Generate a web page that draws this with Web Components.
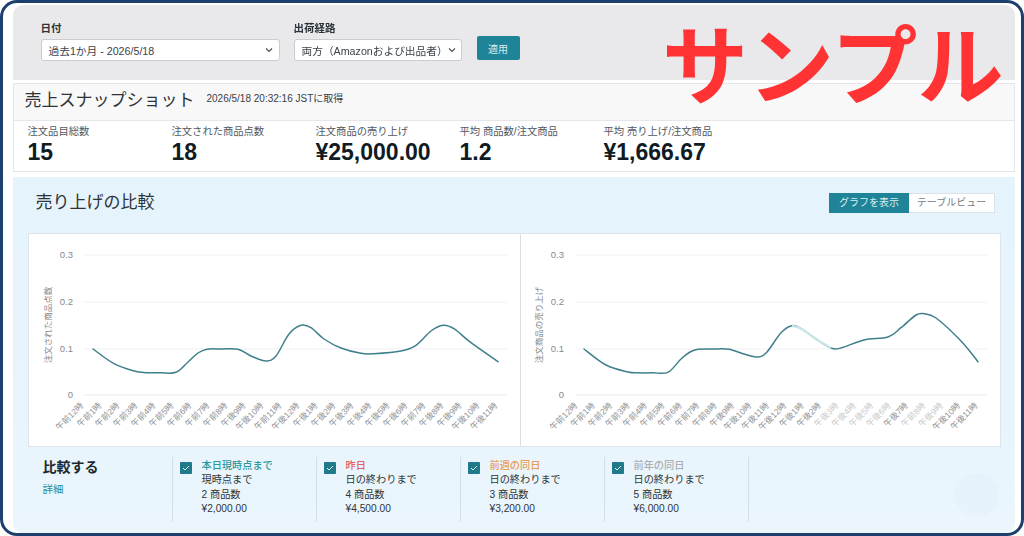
<!DOCTYPE html>
<html lang="ja">
<head>
<meta charset="utf-8">
<title>売上スナップショット</title>
<style>
  html, body { margin: 0; padding: 0; background: #fff; }
</style>
</head>
<body>
<sample-frame>
  <filter-bar>
    <select-box label="日付" value="過去1か月 - 2026/5/18" style="width:239px"></select-box>
    <select-box label="出荷経路" value="両方（Amazonおよび出品者）" style="width:168px"></select-box>
    <apply-button>適用</apply-button>
  </filter-bar>
  <sales-snapshot stamp="2026/5/18 20:32:16 JSTに取得">
    <stat-item label="注文品目総数" value="15"></stat-item>
    <stat-item label="注文された商品点数" value="18"></stat-item>
    <stat-item label="注文商品の売り上げ" value="¥25,000.00"></stat-item>
    <stat-item label="平均 商品数/注文商品" value="1.2"></stat-item>
    <stat-item label="平均 売り上げ/注文商品" value="¥1,666.67"></stat-item>
  </sales-snapshot>
  <compare-panel>
    <line-chart slot="charts" id="units" ytitle="注文された商品点数" style="width:492px"></line-chart>
    <line-chart slot="charts" id="sales" ytitle="注文商品の売り上げ" style="width:479px"></line-chart>
    <compare-item tone="#2a97a0" name="本日現時点まで" until="現時点まで" units="2 商品数" amount="¥2,000.00"></compare-item>
    <compare-item tone="#df5f63" name="昨日" until="日の終わりまで" units="4 商品数" amount="¥4,500.00"></compare-item>
    <compare-item tone="#e89c5c" name="前週の同日" until="日の終わりまで" units="3 商品数" amount="¥3,200.00"></compare-item>
    <compare-item tone="#a9aeb2" name="前年の同日" until="日の終わりまで" units="5 商品数" amount="¥6,000.00"></compare-item>
  </compare-panel>
</sample-frame>

<script>
class SampleFrame extends HTMLElement {
  constructor() {
    super();
    this.shadowDOM = this.attachShadow({ mode: "open" });
  }
  connectedCallback() {
    this.shadowDOM.innerHTML = `
      <style>
        :host {
          display: block;
          position: relative;
          box-sizing: border-box;
          width: 1024px;
          height: 536px;
          border: solid #1d3f6e;
          border-width: 3px 3px 3px 3.5px;
          border-radius: 17px;
          padding: 2px 6px 0 9.5px;
          background: #fff;
          font-family: "Liberation Sans", "Noto Sans CJK JP", sans-serif;
          color: #20282e;
        }
        .inner {
          display: flex;
          flex-direction: column;
          height: 100%;
          border-radius: 10px;
          overflow: hidden;
          filter: blur(0.35px);
        }
        .stamp {
          position: absolute;
          top: 6px;
          left: 659px;
          font: 700 86px/1.2 "Noto Sans CJK JP", sans-serif;
          color: #ff3333;
          white-space: nowrap;
        }
      </style>
      <div class="inner"><slot></slot></div>
      <div class="stamp">サンプル</div>`;
  }
}
customElements.define("sample-frame", SampleFrame);

class FilterBar extends HTMLElement {
  connectedCallback() {
    this.attachShadow({ mode: "open" }).innerHTML = `
      <style>
        :host {
          display: flex;
          flex: none;
          box-sizing: border-box;
          height: 75px;
          padding: 16px 0 0 28px;
          gap: 14px;
          background: #e9e9ec;
        }
      </style>
      <slot></slot>`;
  }
}
customElements.define("filter-bar", FilterBar);

class SelectBox extends HTMLElement {
  connectedCallback() {
    this.attachShadow({ mode: "open" }).innerHTML = `
      <style>
        :host { display: block; }
        label {
          display: block;
          height: 14px;
          margin-bottom: 4px;
          font-size: 10.5px;
          line-height: 14px;
          font-weight: 700;
          color: #2b3238;
        }
        .box {
          display: flex;
          align-items: center;
          justify-content: space-between;
          box-sizing: border-box;
          height: 22px;
          padding: 0 6px 0 7px;
          background: #fff;
          border: 1px solid #c9ccd0;
          border-radius: 3px;
          font-size: 10.7px;
          color: #3c4349;
          white-space: nowrap;
        }
        svg { flex: none; }
      </style>
      <label>${this.getAttribute("label")}</label>
      <div class="box">
        <span>${this.getAttribute("value")}</span>
        <svg width="8" height="6" viewBox="0 0 8 6"><path d="M1 1.5 4 4.5 7 1.5" fill="none" stroke="#4a5157" stroke-width="1.2"/></svg>
      </div>`;
  }
}
customElements.define("select-box", SelectBox);

class ApplyButton extends HTMLElement {
  connectedCallback() {
    this.attachShadow({ mode: "open" }).innerHTML = `
      <style>
        :host {
          display: flex;
          align-items: center;
          justify-content: center;
          box-sizing: border-box;
          width: 43px;
          height: 24px;
          margin: 15px 0 0 1px;
          background: #1f8497;
          border-radius: 2px;
          color: #d8eef1;
          font-size: 10px;
        }
      </style>
      <slot></slot>`;
  }
}
customElements.define("apply-button", ApplyButton);

class SalesSnapshot extends HTMLElement {
  connectedCallback() {
    this.attachShadow({ mode: "open" }).innerHTML = `
      <style>
        :host {
          display: block;
          flex: none;
          box-sizing: border-box;
          height: 89px;
          margin: 3px 0 5px;
          border: 1px solid #e6e6e8;
          background: #fff;
        }
        header {
          display: flex;
          align-items: center;
          box-sizing: border-box;
          height: 37px;
          padding: 0 0 7px 11px;
          background: #f8f8f8;
          border-bottom: 1px solid #e6e6e8;
        }
        h2 { margin: 0; font-size: 17px; font-weight: 400; color: #2e3438; }
        span { margin-left: 12px; font-size: 10px; color: #3a4147; position: relative; top: -1px; }
        .stats { display: flex; padding: 4px 0 0 14px; }
      </style>
      <header><h2>売上スナップショット</h2><span>${this.getAttribute("stamp")}</span></header>
      <div class="stats"><slot></slot></div>`;
  }
}
customElements.define("sales-snapshot", SalesSnapshot);

class StatItem extends HTMLElement {
  connectedCallback() {
    this.attachShadow({ mode: "open" }).innerHTML = `
      <style>
        :host { display: block; width: 144px; white-space: nowrap; }
        .label { height: 14px; font-size: 10.3px; line-height: 14px; color: #51585e; }
        .value { height: 26px; font-size: 23px; line-height: 26px; font-weight: 700; color: #111b24; }
      </style>
      <div class="label">${this.getAttribute("label")}</div>
      <div class="value">${this.getAttribute("value")}</div>`;
  }
}
customElements.define("stat-item", StatItem);

class ComparePanel extends HTMLElement {
  connectedCallback() {
    this.attachShadow({ mode: "open" }).innerHTML = `
      <style>
        :host {
          display: block;
          position: relative;
          flex: 1;
          min-height: 0;
          padding: 13px 20px 0 15px;
          background: linear-gradient(180deg, #e5f3fc, #eaf5fc);
        }
        .head { display: flex; align-items: center; justify-content: space-between; height: 22px; padding-left: 8px; }
        h3 { margin: 0; font-size: 17px; font-weight: 400; color: #2e3438; position: relative; top: -1px; }
        .toggle { display: flex; margin-top: 4px; height: 20px; box-sizing: border-box; font-size: 10px; line-height: 20px; text-align: center; }
        .toggle .on { width: 80px; background: #1f8497; color: #d8eef1; }
        .toggle .off { box-sizing: border-box; width: 86px; line-height: 18px; background: #fff; color: #767d83; border: 1px solid #dbe3ea; border-left: 0; }
        .charts {
          display: flex;
          width: 973px;
          height: 214px;
          margin-top: 21px;
          box-sizing: border-box;
          border: 1px solid #dce5ec;
          background: #fff;
        }
        .bottom { display: flex; margin: 10px 0 0 15px; height: 65px; }
        .title { width: 129px; }
        .title b { display: block; font-size: 14px; line-height: 20px; color: #20282e; }
        .title a { display: block; margin-top: 4px; font-size: 10.5px; line-height: 16px; color: #2a8b96; }
        .items { display: flex; border-right: 1px solid #d3dfe8; }
        .blob {
          position: absolute;
          right: 16px;
          bottom: 16px;
          width: 44px;
          height: 44px;
          border-radius: 50%;
          background: rgba(170, 205, 230, 0.05);
        }
      </style>
      <div class="head">
        <h3>売り上げの比較</h3>
        <div class="toggle"><div class="on">グラフを表示</div><div class="off">テーブルビュー</div></div>
      </div>
      <div class="charts"><slot name="charts"></slot></div>
      <div class="bottom">
        <div class="title"><b>比較する</b><a>詳細</a></div>
        <div class="items"><slot></slot></div>
      </div>
      <div class="blob"></div>`;
  }
}
customElements.define("compare-panel", ComparePanel);

class CompareItem extends HTMLElement {
  connectedCallback() {
    const a = n => this.getAttribute(n);
    this.attachShadow({ mode: "open" }).innerHTML = `
      <style>
        :host {
          display: flex;
          box-sizing: border-box;
          width: 144px;
          padding: 2px 0 0 7px;
          gap: 10px;
          border-left: 1px solid #d3dfe8;
          font-size: 10.2px;
          line-height: 14.4px;
          color: #2e353a;
        }
        .check {
          flex: none;
          display: flex;
          align-items: center;
          justify-content: center;
          width: 12px;
          height: 12px;
          margin-top: 3px;
          background: #1f7a8c;
          border-radius: 1px;
        }
        .name { color: ${a("tone")}; font-weight: 500; }
      </style>
      <div class="check"><svg width="8" height="6" viewBox="0 0 8 6"><path d="M1 3 3 5 7 1" fill="none" stroke="#e4f2f4" stroke-width="1"/></svg></div>
      <div>
        <div class="name">${a("name")}</div>
        <div>${a("until")}</div>
        <div>${a("units")}</div>
        <div>${a("amount")}</div>
      </div>`;
  }
}
customElements.define("compare-item", CompareItem);

// traced from the picture, in page coordinates
const CHARTS = {
  units: {
    box: [28, 233, 492, 212],
    axisX: 72, gridFrom: 83, gridTo: 506, titleX: 50,
    labelFrom: 83, labelStep: 18,
    labels: ["午前12時","午前1時","午前2時","午前3時","午前4時","午前5時","午前6時","午前7時","午前8時","午後9時","午後10時","午前11時","午後12時","午後1時","午後2時","午後3時","午後4時","午後5時","午後6時","午前7時","午後8時","午後9時","午後10時","午後11時"],
    line: [[92,348],[113,362.7],[133,370],[145,371.7],[160,371.8],[175,371.3],[187,361],[197,352],[206,348.2],[220,348],[237,348.2],[250,355],[265,360],[275,355],[288,333],[300,324.3],[310,326.7],[323,338],[340,347],[360,352.3],[373,352.7],[400,350],[415,344.3],[430,330],[442,324.3],[453,327.7],[470,341.7],[497,360.7]]
  },
  sales: {
    box: [520, 233, 479, 212],
    axisX: 563, gridFrom: 575, gridTo: 986, titleX: 541,
    labelFrom: 577, labelStep: 17.4,
    labels: ["午前12時","午前1時","午前2時","午前3時","午前4時","午前5時","午前6時","午前7時","午前8時","午後9時","午後10時","午後11時","午後12時","午後1時","午後2時","午後3時","午後4時","午後5時","午後6時","午後7時","午前8時","午後9時","午後10時","午後11時"],
    fade: [15, 16, 17, 18, 20, 21],
    line: [[583,348],[605,364],[627,371],[637,371.8],[652,371.8],[667,371.3],[680,358],[689,351],[697,348.2],[712,348],[728,348.2],[743,353],[757,356],[766,351],[780,331.7],[791,324.7],[800,327.7],[815,338],[830,347],[840,347],[863,339],[887,336],[900,326.7],[915,314],[923,312.7],[935,317],[960,340],[977,360.7]],
    pale: [[791,324.7],[800,327.7],[815,338],[830,347]]
  }
};

// catmull-rom through the traced points
function smooth(pts) {
  let d = `M${pts[0][0]} ${pts[0][1]}`;
  for (let i = 0; i < pts.length - 1; i++) {
    const p0 = pts[i - 1] || pts[i], p1 = pts[i], p2 = pts[i + 1], p3 = pts[i + 2] || p2;
    d += ` C${p1[0] + (p2[0] - p0[0]) / 6} ${p1[1] + (p2[1] - p0[1]) / 6} ${p2[0] - (p3[0] - p1[0]) / 6} ${p2[1] - (p3[1] - p1[1]) / 6} ${p2[0]} ${p2[1]}`;
  }
  return d;
}

class LineChart extends HTMLElement {
  connectedCallback() {
    const c = CHARTS[this.id];
    const ticks = [["0.3", 254], ["0.2", 301], ["0.1", 348], ["0", 394]];
    const grid = ticks.map(([t, y]) => `
      <line x1="${c.gridFrom}" x2="${c.gridTo}" y1="${y}" y2="${y}" stroke="${t === "0" ? "#e6eaef" : "#f0f1f3"}" stroke-width="${t === "0" ? 1.2 : 1}"/>
      <text class="tick" x="${c.axisX}" y="${y + 2.5}" text-anchor="end">${t}</text>`).join("");
    const labels = c.labels.map((t, i) => {
      const x = c.labelFrom + i * c.labelStep;
      const faded = (c.fade || []).includes(i) ? ' opacity="0.5"' : "";
      return `<text class="label" x="${x}" y="405" text-anchor="end" transform="rotate(-45 ${x} 405)"${faded}>${t}</text>`;
    }).join("");
    this.attachShadow({ mode: "open" }).innerHTML = `
      <style>
        :host { display: block; flex: none; box-sizing: border-box; height: 212px; }
        :host(#units) { border-right: 1px solid #d9dfe5; }
        svg { display: block; }
        text { font-family: "Liberation Sans", "Noto Sans CJK JP", sans-serif; }
        .tick { font-size: 9.5px; fill: #85898d; }
        .label { font-size: 8.5px; fill: #8f9295; }
        .ytitle { font-size: 8.5px; fill: #85898d; }
      </style>
      <svg width="${c.box[2]}" height="${c.box[3]}" viewBox="${c.box.join(" ")}">
        ${grid}
        <text class="ytitle" text-anchor="middle" transform="translate(${c.titleX} 324) rotate(-90)">${this.getAttribute("ytitle")}</text>
        ${labels}
        <path d="${smooth(c.line)}" fill="none" stroke="#3f7f8c" stroke-width="1.5" stroke-linecap="round"/>
        ${c.pale ? `<path d="${smooth(c.pale)}" fill="none" stroke="#c8e6e8" stroke-width="2.2"/>` : ""}
      </svg>`;
  }
}
customElements.define("line-chart", LineChart);
</script>
</body>
</html>
